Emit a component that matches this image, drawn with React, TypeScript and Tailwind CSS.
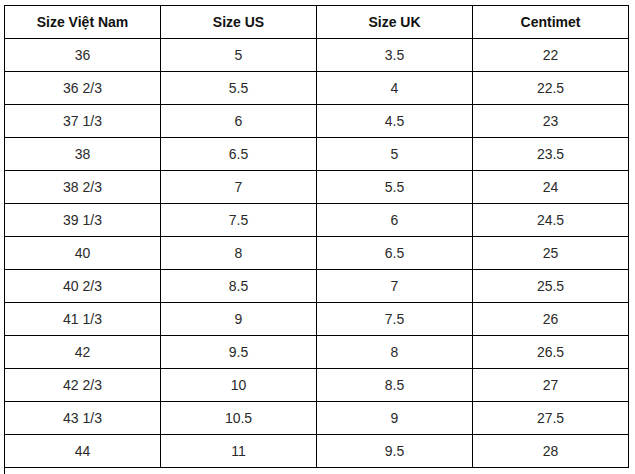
const headers = ["Size Việt Nam", "Size US", "Size UK", "Centimet"];

const rows: string[][] = [
  ["36", "5", "3.5", "22"],
  ["36 2/3", "5.5", "4", "22.5"],
  ["37 1/3", "6", "4.5", "23"],
  ["38", "6.5", "5", "23.5"],
  ["38 2/3", "7", "5.5", "24"],
  ["39 1/3", "7.5", "6", "24.5"],
  ["40", "8", "6.5", "25"],
  ["40 2/3", "8.5", "7", "25.5"],
  ["41 1/3", "9", "7.5", "26"],
  ["42", "9.5", "8", "26.5"],
  ["42 2/3", "10", "8.5", "27"],
  ["43 1/3", "10.5", "9", "27.5"],
  ["44", "11", "9.5", "28"],
];

export default function App() {
  return (
    <div className="h-[474px] w-[635px] overflow-hidden bg-white pl-[4px] pt-[5px] font-['Liberation_Sans',Arial,sans-serif] text-[14px]">
      <div className="grid w-[625px] grid-cols-4 border-l border-t border-black">
        {headers.map((h) => (
          <div
            key={h}
            className="flex h-[33px] items-center justify-center border-b border-r border-black pt-[1px] font-bold text-[#111]"
          >
            {h}
          </div>
        ))}
        {rows.map((row, i) =>
          row.map((cell, j) => (
            <div
              key={`${i}-${j}`}
              className="flex h-[33px] items-center justify-center border-b border-r border-black pt-[1px] text-[#2a2a2a]"
            >
              {cell}
            </div>
          ))
        )}
      </div>
      <div className="h-[20px] w-[625px] border-l border-black" />
    </div>
  );
}
